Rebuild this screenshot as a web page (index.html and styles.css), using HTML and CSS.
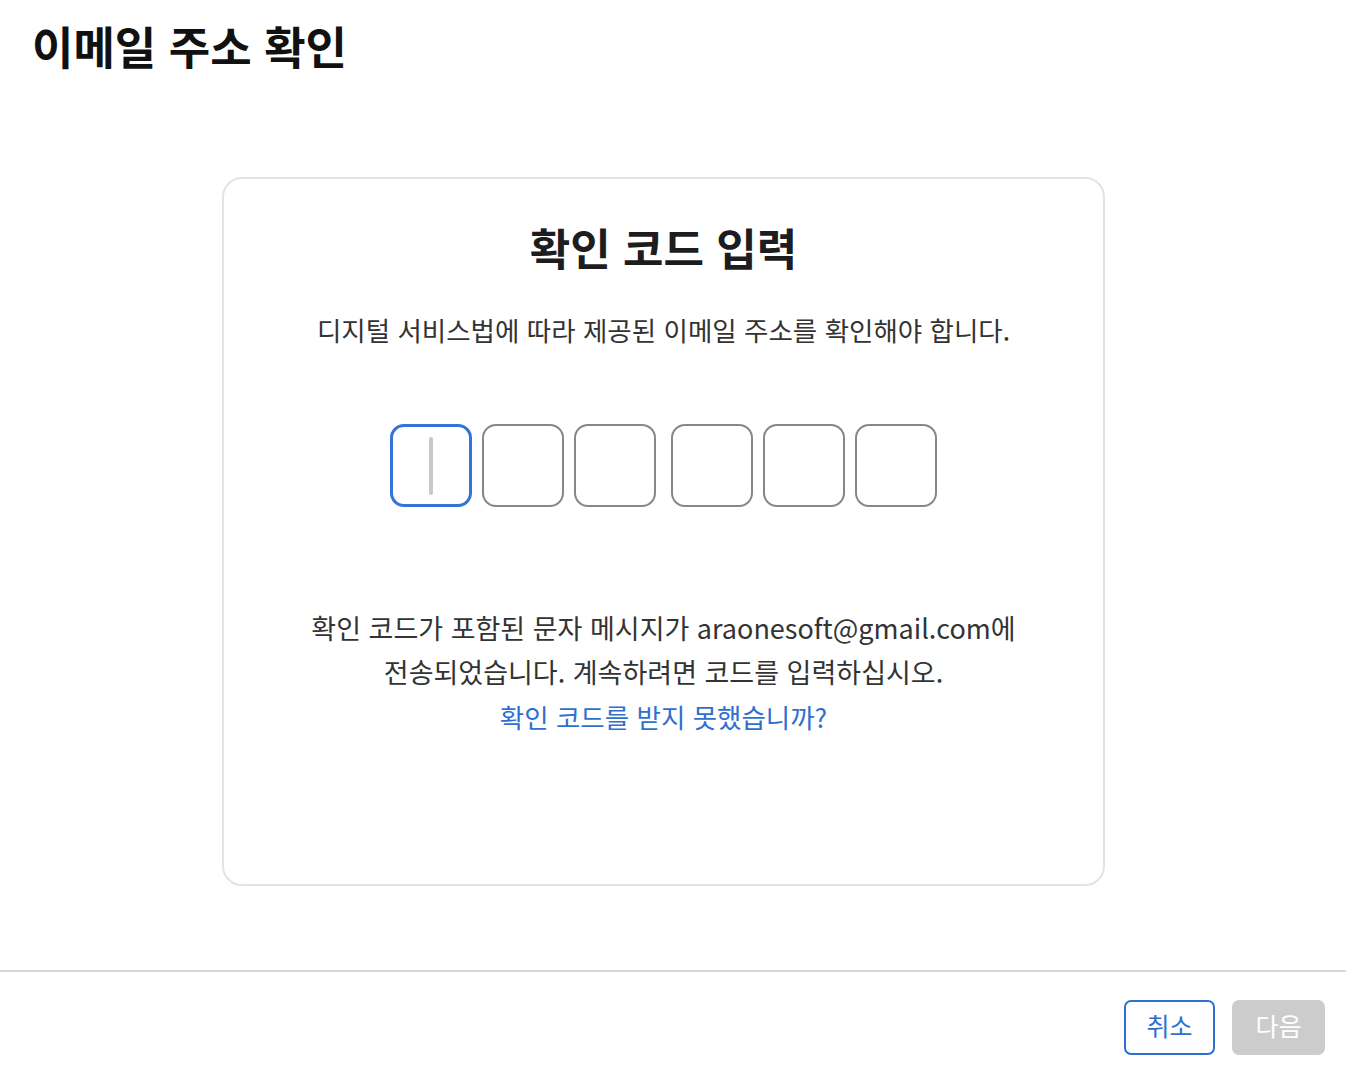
FILE: index.html
```html
<!DOCTYPE html>
<html lang="ko">
<head>
<meta charset="utf-8">
<title>이메일 주소 확인</title>
<link rel="stylesheet" href="styles.css">
</head>
<body>
<div class="page">
  <header class="page-header">
    <h1 class="page-title">이메일 주소 확인</h1>
  </header>
  <main class="main">
    <section class="card">
      <h2 class="card-title">확인 코드 입력</h2>
      <p class="card-sub">디지털 서비스법에 따라 제공된 이메일 주소를 확인해야 합니다.</p>
      <div class="otp">
        <div class="otp-group">
          <div class="otp-box active"><span class="caret"></span></div>
          <div class="otp-box"></div>
          <div class="otp-box"></div>
        </div>
        <div class="otp-group">
          <div class="otp-box"></div>
          <div class="otp-box"></div>
          <div class="otp-box"></div>
        </div>
      </div>
      <p class="card-info">확인 코드가 포함된 문자 메시지가 araonesoft@gmail.com에<br>전송되었습니다. 계속하려면 코드를 입력하십시오.</p>
      <a class="card-link" href="#">확인 코드를 받지 못했습니까?</a>
    </section>
  </main>
  <footer class="footer">
    <button class="btn btn-cancel" type="button">취소</button>
    <button class="btn btn-next" type="button" disabled>다음</button>
  </footer>
</div>
</body>
</html>
```

FILE: styles.css
```css
* { box-sizing: border-box; }
html, body { margin: 0; padding: 0; background: #fff; }
body {
  font-family: "Noto Sans CJK KR", "Noto Sans", sans-serif;
  color: #1d1d1f;
}
.page {
  width: 1346px;
  height: 1074px;
  display: flex;
  flex-direction: column;
}
.page-header {
  padding: 14px 32px 0;
}
.page-title {
  margin: 0;
  font-size: 45px;
  line-height: 64px;
  font-weight: 700;
  color: #111;
}
.main {
  flex: 1;
  display: flex;
  justify-content: flex-start;
  padding-top: 99px;
  padding-left: 222px;
}
.card {
  width: 883px;
  height: 709px;
  border: 2px solid #e3e3e3;
  border-radius: 20px;
  display: flex;
  flex-direction: column;
  align-items: center;
  padding-top: 38px;
}
.card-title {
  margin: 0;
  font-size: 44px;
  line-height: 60px;
  font-weight: 700;
  color: #1d1d1f;
}
.card-sub {
  margin: 35px 0 0;
  font-size: 26.5px;
  line-height: 36px;
  color: #333;
}
.otp {
  display: flex;
  gap: 15px;
  margin-top: 76px;
}
.otp-group {
  display: flex;
  gap: 10px;
}
.otp-box {
  width: 82px;
  height: 83px;
  border: 2px solid #87878b;
  border-radius: 14px;
  display: flex;
  align-items: center;
  justify-content: center;
}
.otp-box.active {
  border: 3px solid #3572da;
}
.caret {
  width: 4px;
  height: 58px;
  border-radius: 2px;
  background: #c8c8c8;
}
.card-info {
  margin: 99px 0 0;
  font-size: 27px;
  line-height: 44px;
  text-align: center;
  color: #333;
}
.card-link {
  margin-top: 1px;
  font-size: 26.5px;
  line-height: 44px;
  color: #2f6fd0;
  text-decoration: none;
}
.footer {
  height: 104px;
  border-top: 2px solid #d8d8d8;
  display: flex;
  justify-content: flex-end;
  align-items: flex-start;
  gap: 17px;
  padding: 28px 21px 0 0;
}
.btn {
  height: 55px;
  border-radius: 7px;
  font-family: "Noto Sans CJK KR", "Noto Sans", sans-serif;
  font-size: 25px;
  padding: 0 0 6px;
}
.btn-cancel {
  width: 91px;
  background: #fff;
  border: 2px solid #2f6fd0;
  color: #2f6fd0;
}
.btn-next {
  width: 93px;
  background: #cccccc;
  border: none;
  color: #fff;
}
```
